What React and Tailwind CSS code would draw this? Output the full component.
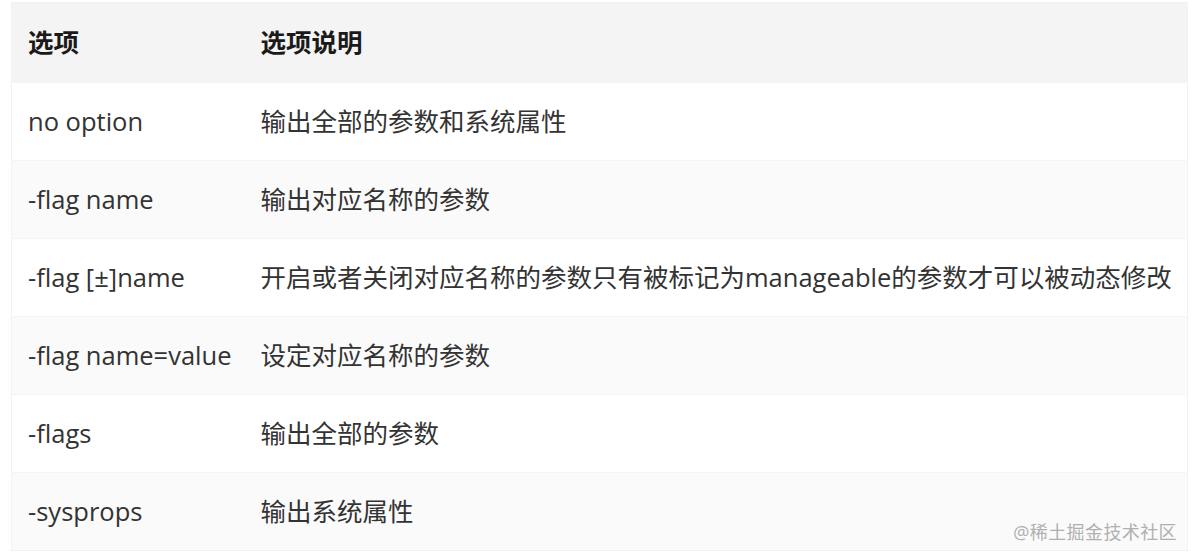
const rows = [
  ['no option', '输出全部的参数和系统属性'],
  ['-flag name', '输出对应名称的参数'],
  ['-flag [±]name', '开启或者关闭对应名称的参数只有被标记为manageable的参数才可以被动态修改'],
  ['-flag name=value', '设定对应名称的参数'],
  ['-flags', '输出全部的参数'],
  ['-sysprops', '输出系统属性'],
]

export default function App() {
  return (
    <div
      className="relative w-[1194px] h-[560px] bg-white overflow-hidden pt-[2px] pl-[11px]"
      style={{ fontFamily: '"Open Sans", "Noto Sans CJK SC", sans-serif' }}
    >
      <table className="w-[1177px] table-fixed border-collapse border border-[#f2f2f2] text-[25.5px] text-[#333]">
        <colgroup>
          <col className="w-[233px]" />
          <col />
        </colgroup>
        <thead>
          <tr className="h-[80px] bg-[#f4f4f4]">
            <th className="pl-4 text-left font-bold text-[#1a1a1a]">选项</th>
            <th className="pl-4 text-left font-bold text-[#1a1a1a]">选项说明</th>
          </tr>
        </thead>
        <tbody>
          {rows.map(([opt, desc], i) => (
            <tr
              key={opt}
              className={`h-[78px] border-t border-[#f4f4f4] ${i % 2 === 1 ? 'bg-[#fafafa]' : 'bg-white'}`}
            >
              <td className="pl-4 whitespace-nowrap">{opt}</td>
              <td className="pl-4 whitespace-nowrap">{desc}</td>
            </tr>
          ))}
        </tbody>
      </table>

      {/* watermark */}
      <div className="absolute right-[17px] top-[519px] text-[18px] text-[#b0b0b0] tracking-[0.4px]">
        @稀土掘金技术社区
      </div>
    </div>
  )
}
